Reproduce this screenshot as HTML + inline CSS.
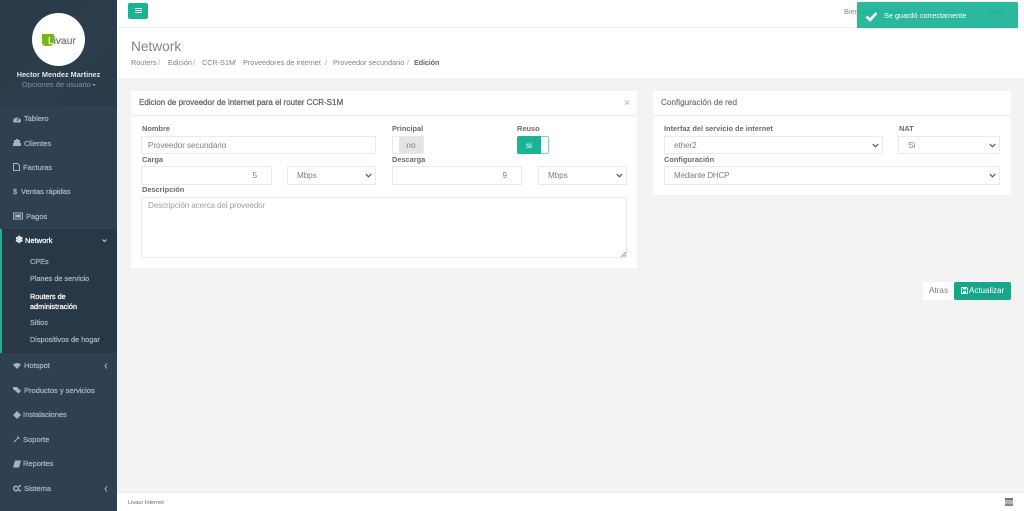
<!DOCTYPE html>
<html lang="es"><head><meta charset="utf-8"><title>Network</title>
<style>
*{box-sizing:border-box}
html,body{margin:0;padding:0;width:1024px;height:511px;overflow:hidden;background:#f3f3f4;font-family:"Liberation Sans",sans-serif;color:#676a6c;font-size:8px}
.a,.t{position:absolute;white-space:nowrap}
.t{line-height:10px}
#side{position:absolute;left:0;top:0;width:117px;height:511px;background:#2f4050}
#head{position:absolute;left:0;top:0;width:117px;height:106px;background:linear-gradient(135deg,#2b3a48 0,#2c3c4b 60%,#2a3a48 100%)}
.m{position:absolute;left:24px;color:#a7b1c2;font-size:7.500px;line-height:10px;-webkit-text-stroke:.25px;white-space:nowrap}
.sub{position:absolute;left:30px;color:#a7b1c2;font-size:7.300px;line-height:9.500px;-webkit-text-stroke:.25px;white-space:nowrap}
.ic{position:absolute;left:13px;width:8px;height:8px}
.card{position:absolute;background:#fff}
.hr{position:absolute;height:1px;background:#eceef0}
.lb{position:absolute;font-weight:bold;font-size:7.400px;line-height:9px;color:#676a6c;white-space:nowrap}
.f{position:absolute;background:#fff;border:1px solid #e9eaeb;font-size:8.200px;letter-spacing:-.1px;color:#808080;line-height:17px;padding-left:6px;white-space:nowrap}
.f svg{position:absolute;right:3px;top:6px;width:7px;height:5px}
.bc{position:absolute;top:58px;font-size:7.200px;line-height:10px;color:#808080;white-space:nowrap;letter-spacing:.05px}
</style></head><body>
<div class="a" style="left:117px;top:0;width:907px;height:28px;background:#fff;border-bottom:1px solid #f0f0f0"></div>
<div class="a" style="left:117px;top:28px;width:907px;height:50px;background:#fff"></div>

<div id="side"><div id="head"></div>
<div class="a" style="left:32px;top:13px;width:53px;height:53px;border-radius:50%;background:#fff"></div>
<svg class="a" style="left:42px;top:34px" width="13" height="13" viewBox="0 0 13 13"><path d="M0 0H12V7Q12 12 7 12H4Q0 12 0 8Z" fill="#7cb518"/></svg>
<div class="a" style="left:48px;top:36px;font-size:10.200px;line-height:11px;color:#7d7d7d;-webkit-text-stroke:.25px"><span style="color:#eef3e2">L</span>ivaur</div>
<div class="a" style="left:0;width:117px;top:70px;text-align:center;color:#dfe4ed;font-weight:bold;font-size:7.300px;line-height:10px">Hector Mendez Martinez</div>
<div class="a" style="left:22px;top:80px;color:#8095a8;font-size:7.500px;line-height:10px">Opciones de usuario</div>
<div class="a" style="left:92px;top:84px;border:2px solid transparent;border-top:2px solid #8095a8"></div>

<svg class="ic" style="top:115px" viewBox="0 0 8 8"><path d="M0 6.500A4 4 0 1 1 8 6.500L7 7.500H1Z" fill="#a7b1c2"/><path d="M4 6L5.500 3" stroke="#2f4050"/></svg><div class="m" style="top:114px">Tablero</div>
<svg class="ic" style="top:139px" viewBox="0 0 8 8"><path d="M0 4H8V7H0Z M1 1H3V4H1Z M3 0H5V4H3Z M5 1H7V4H5Z" fill="#a7b1c2"/></svg><div class="m" style="top:139px">Clientes</div>
<svg class="ic" style="top:163px;width:7px" viewBox="0 0 7 8"><path d="M.5.5H4.500L6.500 2.500V7.500H.5Z" fill="none" stroke="#a7b1c2"/></svg><div class="m" style="left:23px;top:163px">Facturas</div>
<div class="m" style="left:13px;top:187px">$</div><div class="m" style="left:21px;top:187px">Ventas rápidas</div>
<svg class="ic" style="top:212px;width:10px" viewBox="0 0 10 8"><path d="M.5 1H9.500V7H.5Z" fill="none" stroke="#a7b1c2"/><rect x="2" y="2.500" width="6" height="3" fill="#a7b1c2"/></svg><div class="m" style="left:26px;top:212px">Pagos</div>

<div class="a" style="left:0;top:229px;width:117px;height:124px;background:#293846"></div>
<div class="a" style="left:0;top:229px;width:2px;height:124px;background:#1ab394"></div>
<div class="a" style="left:15px;top:236px;color:#fff;font-size:10px;line-height:10px;font-weight:bold">❄</div>
<div class="m" style="left:25px;top:236px;color:#fff">Network</div>
<svg class="a" style="left:102px;top:239px" width="5" height="4" viewBox="0 0 5 4"><path d="M.5 .5L2.500 2.500L4.500 .5" fill="none" stroke="#c3cad5"/></svg>
<div class="sub" style="top:257px">CPEs</div>
<div class="sub" style="top:274px">Planes de servicio</div>
<div class="sub" style="top:292px;color:#fff">Routers de<br>administración</div>
<div class="sub" style="top:318px">Sitios</div>
<div class="sub" style="top:335px">Dispositivos de hogar</div>

<svg class="ic" style="top:362px" viewBox="0 0 8 8"><path d="M0 2.500Q4-.5 8 2.500L4 7Z" fill="#a7b1c2"/></svg><div class="m" style="left:24px;top:361px">Hotspot</div>
<svg class="a" style="left:104px;top:363px" width="4" height="6" viewBox="0 0 4 6"><path d="M3 .5L1 3L3 5.500" fill="none" stroke="#a7b1c2"/></svg>
<svg class="ic" style="top:386px" viewBox="0 0 8 8"><path d="M0 1H4L8 5L5.500 7.500L0 3Z" fill="#a7b1c2"/></svg><div class="m" style="top:386px">Productos y servicios</div>
<svg class="ic" style="top:411px" viewBox="0 0 8 8"><path d="M4 0L8 4L4 8L0 4Z" fill="#a7b1c2"/></svg><div class="m" style="left:23px;top:410px">Instalaciones</div>
<svg class="ic" style="top:435px" viewBox="0 0 8 8"><path d="M7.500 2A2.500 2.500 0 0 1 4.500 4L1.500 7.500L.5 6.500L4 3.500A2.500 2.500 0 0 1 6 .5L4.800 2L6 3.200Z" fill="#a7b1c2"/></svg><div class="m" style="left:23px;top:435px">Soporte</div>
<svg class="ic" style="top:460px" viewBox="0 0 8 8"><path d="M2 .5H8L6 7.500H0Z" fill="#a7b1c2"/></svg><div class="m" style="left:23px;top:459px">Reportes</div>
<svg class="ic" style="top:484px" viewBox="0 0 8 8"><circle cx="3" cy="4.500" r="2.200" fill="none" stroke="#a7b1c2" stroke-width="1.500"/><circle cx="6.800" cy="2" r="1.100" fill="#a7b1c2"/><circle cx="6.800" cy="6.500" r="1.100" fill="#a7b1c2"/></svg><div class="m" style="top:484px">Sistema</div>
<svg class="a" style="left:104px;top:486px" width="4" height="6" viewBox="0 0 4 6"><path d="M3 .5L1 3L3 5.500" fill="none" stroke="#a7b1c2"/></svg>
</div>

<div class="a" style="left:128px;top:3px;width:20px;height:16px;background:#1ab394;border-radius:2px"></div>
<div class="a" style="left:135px;top:8px;width:7px;height:5px;border-top:1px solid #fff;border-bottom:1px solid #fff"></div>
<div class="a" style="left:135px;top:10px;width:7px;height:1px;background:#fff"></div>
<div class="t" style="left:844px;top:7px;color:#888;font-size:7.500px">Bienvenido a Livaur</div>
<div class="t" style="left:990px;top:7px;color:#888;font-size:7.500px">Salir</div>

<div class="a" style="left:131px;top:38px;font-size:13.700px;line-height:17px;color:#858585">Network</div>
<div class="bc" style="left:131px">Routers</div><div class="bc" style="left:158px;color:#aaa">/</div>
<div class="bc" style="left:168px">Edición</div><div class="bc" style="left:193px;color:#aaa">/</div>
<div class="bc" style="left:202px">CCR-S1M</div><div class="bc" style="left:234px;color:#aaa">/</div>
<div class="bc" style="left:243px">Proveedores de internet</div><div class="bc" style="left:325px;color:#aaa">/</div>
<div class="bc" style="left:333px">Proveedor secundario</div><div class="bc" style="left:407px;color:#aaa">/</div>
<div class="bc" style="left:414px;top:58px;font-weight:bold;font-size:7.200px;color:#666;letter-spacing:-.1px">Edición</div>

<div class="card" style="left:131px;top:91px;width:506px;height:177px"></div>
<div class="hr" style="left:131px;top:115px;width:506px"></div>
<div class="a" style="left:139px;top:98px;font-size:8px;line-height:10px;color:#676a6c;-webkit-text-stroke:.3px">Edicion de proveedor de internet para el router CCR-S1M</div>
<div class="a" style="left:624px;top:99px;color:#c8ccd0;font-size:10px;line-height:10px;font-weight:bold">×</div>

<div class="lb" style="left:142px;top:124px">Nombre</div>
<div class="f" style="left:141px;top:136px;width:235px;height:18px">Proveedor secundario</div>
<div class="lb" style="left:392px;top:124px">Principal</div>
<div class="a" style="left:392px;top:136px;width:32px;height:18px;border:1px solid #e9eaeb;background:#fff"></div>
<div class="a" style="left:399px;top:137px;width:24px;height:16px;background:#e4e4e4;color:#808080;font-size:8.500px;line-height:17px;text-align:center">no</div>
<div class="lb" style="left:517px;top:124px">Reuso</div>
<div class="a" style="left:517px;top:136px;width:32px;height:18px;border:1px solid #7fd6c4;border-radius:2px;background:#fff"></div>
<div class="a" style="left:517px;top:136px;width:24px;height:18px;background:#1ab394;color:#fff;font-size:8.500px;line-height:18px;text-align:center;border-radius:2px 0 0 2px">si</div>

<div class="lb" style="left:142px;top:155px">Carga</div>
<div class="f" style="left:141px;top:166px;width:131px;height:19px;text-align:right;padding-right:14px;line-height:18px">5</div>
<div class="f" style="left:287px;top:166px;width:89px;height:19px;padding-left:9px;line-height:18px">Mbps<svg viewBox="0 0 7 5"><path d="M.8 1L3.500 3.800L6.200 1" fill="none" stroke="#555" stroke-width="1.200"/></svg></div>
<div class="lb" style="left:392px;top:155px">Descarga</div>
<div class="f" style="left:392px;top:166px;width:130px;height:19px;text-align:right;padding-right:14px;line-height:18px">9</div>
<div class="f" style="left:538px;top:166px;width:89px;height:19px;padding-left:9px;line-height:18px">Mbps<svg viewBox="0 0 7 5"><path d="M.8 1L3.500 3.800L6.200 1" fill="none" stroke="#555" stroke-width="1.200"/></svg></div>
<div class="lb" style="left:142px;top:185px">Descripción</div>
<div class="f" style="left:141px;top:197px;width:486px;height:61px;color:#a0a0a0;line-height:16px;letter-spacing:-.15px">Descripción acerca del proveedor
<svg style="right:0;top:auto;bottom:0;width:6px;height:6px" viewBox="0 0 6 6"><path d="M1 6L6 1M3.500 6L6 3.500" stroke="#888" stroke-width=".8"/></svg></div>

<div class="card" style="left:653px;top:91px;width:358px;height:104px"></div>
<div class="hr" style="left:653px;top:115px;width:358px"></div>
<div class="a" style="left:661px;top:98px;font-size:8.200px;line-height:10px;color:#777;-webkit-text-stroke:.2px">Configuración de red</div>
<div class="lb" style="left:664px;top:124px">Interfaz del servicio de internet</div>
<div class="f" style="left:664px;top:136px;width:219px;height:18px;padding-left:9px">ether2<svg viewBox="0 0 7 5"><path d="M.8 1L3.500 3.800L6.200 1" fill="none" stroke="#555" stroke-width="1.200"/></svg></div>
<div class="lb" style="left:899px;top:124px">NAT</div>
<div class="f" style="left:898px;top:136px;width:102px;height:18px;padding-left:9px">Si<svg viewBox="0 0 7 5"><path d="M.8 1L3.500 3.800L6.200 1" fill="none" stroke="#555" stroke-width="1.200"/></svg></div>
<div class="lb" style="left:664px;top:155px">Configuración</div>
<div class="f" style="left:664px;top:166px;width:336px;height:19px;padding-left:9px;line-height:18px;font-size:8px;letter-spacing:-.2px">Mediante DHCP<svg viewBox="0 0 7 5"><path d="M.8 1L3.500 3.800L6.200 1" fill="none" stroke="#555" stroke-width="1.200"/></svg></div>

<div class="a" style="left:923px;top:282px;width:31px;height:18px;background:#fff;text-align:center;font-size:8.200px;line-height:18px;color:#808080">Atras</div>
<div class="a" style="left:954px;top:282px;width:57px;height:18px;background:#18a689;border-radius:2px;color:#fff;font-size:8px;line-height:18px;padding-left:15px;white-space:nowrap">Actualizar</div>
<svg class="a" style="left:961px;top:287px" width="7" height="7" viewBox="0 0 7 7"><path d="M.5.5H5.500L6.500 1.500V6.500H.5Z" fill="none" stroke="#fff"/><path d="M2 .5H5V2.500H2ZM2 4H5V6.500H2Z" fill="#fff"/></svg>

<div class="a" style="left:857px;top:2px;width:161px;height:26px;background:#1ab394;opacity:.92;border-radius:1px;box-shadow:0 0 2px rgba(0,0,0,.2)"></div>
<svg class="a" style="left:865px;top:11px" width="13" height="11" viewBox="0 0 13 11"><path d="M1.500 5.500L5 9L11.500 2" fill="none" stroke="#fff" stroke-width="2.600"/></svg>
<div class="a" style="left:884px;top:11px;color:#fff;font-size:7.300px;line-height:10px">Se guardó correctamente</div>

<div class="a" style="left:117px;top:492px;width:907px;height:19px;background:#fff;border-top:1px solid #eceef0"></div>
<div class="a" style="left:128px;top:498px;font-size:5.600px;line-height:10px;color:#666">Livaur Internet</div>
<div class="a" style="left:1005px;top:498px;width:8px;height:8px;background:#b0b4b8;border-top:2px solid #777;border-bottom:2px solid #888"></div>
</body></html>
